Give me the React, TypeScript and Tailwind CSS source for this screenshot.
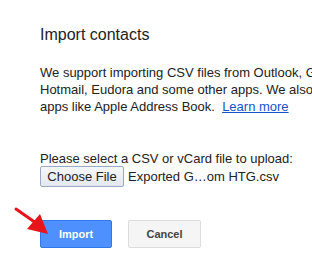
import React from "react";

export default function App() {
  return (
    <div className="w-[312px] h-[270px] overflow-hidden bg-white relative" style={{ fontFamily: '"Liberation Sans", Arial, sans-serif' }}>
      <div className="pl-[40px] pt-[25px] w-[312px] text-[#222]">
        <div className="text-[16px] leading-[20px] text-[#222]">Import contacts</div>
        <div className="mt-[19px] text-[13px] leading-[17px] text-[#222] whitespace-nowrap">
          We support importing CSV files from Outlook, G
          <br />
          Hotmail, Eudora and some other apps. We also
          <br />
          apps like Apple Address Book.&nbsp;&nbsp;
          <a className="text-[#15c] underline">Learn more</a>
        </div>
        <div className="mt-[35px] text-[13px] leading-[17px] whitespace-nowrap">
          Please select a CSV or vCard file to upload:
        </div>
        <div className="flex items-center gap-[4px] mt-[-1px]">
          <div className="h-[21px] w-[84px] flex items-center justify-center border border-[#9aa9c4] rounded-[2px] bg-gradient-to-b from-[#f6f7fa] to-[#e4e8ef] text-[13px] text-[#222]">
            Choose File
          </div>
          <div className="text-[13px] text-[#222] whitespace-nowrap">Exported G…om HTG.csv</div>
        </div>
        <div className="flex gap-[16px] mt-[33px]">
          <div className="h-[28px] w-[72px] flex items-center justify-center rounded-[2px] border border-[#3079ed] bg-[#4d90fe] text-white text-[11px] font-bold">
            Import
          </div>
          <div className="h-[28px] w-[73px] flex items-center justify-center rounded-[2px] border border-[#dcdcdc] bg-[#f5f5f5] text-[#444] text-[11px] font-bold">
            Cancel
          </div>
        </div>
      </div>
      <svg className="absolute left-0 top-0" width="312" height="270" viewBox="0 0 312 270">
        <line x1="16" y1="209" x2="36" y2="223" stroke="#e8141c" strokeWidth="3" strokeLinecap="round" />
        <polygon points="40,214 27,229 48,234" fill="#e8141c" />
      </svg>
    </div>
  );
}
